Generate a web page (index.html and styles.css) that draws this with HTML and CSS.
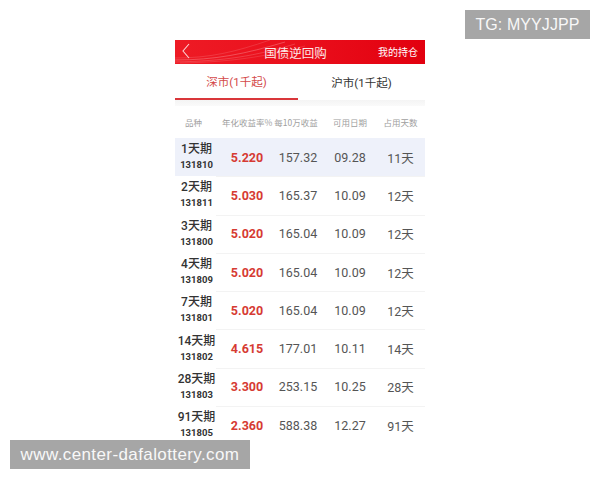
FILE: index.html
```html
<!DOCTYPE html>
<html lang="zh">
<head>
<meta charset="utf-8">
<link rel="stylesheet" href="styles.css">
</head>
<body>
<div class="phone">
  <div class="topbar">
    <svg class="swoosh" width="250" height="24" viewBox="0 0 250 24">
      <path d="M0 20 C40 20 70 14 110 2" stroke="rgba(255,255,255,0.35)" stroke-width="0.7" fill="none"/>
      <path d="M0 22 C50 21 80 16 120 4" stroke="rgba(255,255,255,0.25)" stroke-width="0.7" fill="none"/>
      <path d="M5 23 C55 22 90 17 130 6" stroke="rgba(255,255,255,0.18)" stroke-width="0.7" fill="none"/>
      <path d="M0 18 C35 18 60 12 95 0" stroke="rgba(255,255,255,0.2)" stroke-width="0.7" fill="none"/>
    </svg>
    <svg class="back" width="10" height="16" viewBox="0 0 10 16">
      <path d="M8 1 L2 8 L8 15" stroke="rgba(255,255,255,0.8)" stroke-width="1.1" fill="none"/>
    </svg>
    <span class="title">国债逆回购</span>
    <span class="mine">我的持仓</span>
  </div>
  <div class="tabs">
    <div class="tab active">深市(1千起)</div>
    <div class="tab">沪市(1千起)</div>
  </div>
  <div class="band"></div>
  <div class="thead">
    <span>品种</span><span>年化收益率%</span><span>每10万收益</span><span>可用日期</span><span>占用天数</span>
  </div>
  <div class="row hl">
    <div class="name"><b>1天期</b><small>131810</small></div>
    <span class="rate">5.220</span><span>157.32</span><span>09.28</span><span>11天</span>
  </div>
  <div class="row">
    <div class="name"><b>2天期</b><small>131811</small></div>
    <span class="rate">5.030</span><span>165.37</span><span>10.09</span><span>12天</span>
  </div>
  <div class="row">
    <div class="name"><b>3天期</b><small>131800</small></div>
    <span class="rate">5.020</span><span>165.04</span><span>10.09</span><span>12天</span>
  </div>
  <div class="row">
    <div class="name"><b>4天期</b><small>131809</small></div>
    <span class="rate">5.020</span><span>165.04</span><span>10.09</span><span>12天</span>
  </div>
  <div class="row">
    <div class="name"><b>7天期</b><small>131801</small></div>
    <span class="rate">5.020</span><span>165.04</span><span>10.09</span><span>12天</span>
  </div>
  <div class="row">
    <div class="name"><b>14天期</b><small>131802</small></div>
    <span class="rate">4.615</span><span>177.01</span><span>10.11</span><span>14天</span>
  </div>
  <div class="row">
    <div class="name"><b>28天期</b><small>131803</small></div>
    <span class="rate">3.300</span><span>253.15</span><span>10.25</span><span>28天</span>
  </div>
  <div class="row">
    <div class="name"><b>91天期</b><small>131805</small></div>
    <span class="rate">2.360</span><span>588.38</span><span>12.27</span><span>91天</span>
  </div>
</div>
<div class="tg">TG: MYYJJPP</div>
<div class="url">www.center-dafalottery.com</div>
</body>
</html>
```

FILE: styles.css
```css
html, body {
  margin: 0;
  padding: 0;
  background: #fff;
}
body {
  width: 600px;
  height: 480px;
  position: relative;
  overflow: hidden;
  font-family: Roboto, "Noto Sans CJK SC", sans-serif;
}
.phone {
  width: 250px;
  margin: 40px 0 0 175px;
}
.topbar {
  position: relative;
  height: 24px;
  background: linear-gradient(90deg, #ee1b25 0%, #ea0f1c 50%, #e2000f 100%);
  display: flex;
  align-items: center;
  justify-content: center;
}
.swoosh {
  position: absolute;
  left: 0;
  top: 0;
}
.back {
  position: absolute;
  left: 6px;
  top: 3px;
}
.title {
  color: #fde8e8;
  font-size: 12.5px;
  font-family: "Noto Sans CJK SC", sans-serif;
  margin-left: -9px;
}
.mine {
  position: absolute;
  right: 7px;
  top: 5px;
  color: #fff;
  font-size: 10px;
  line-height: 14px;
  font-family: "Noto Sans CJK SC", sans-serif;
}
.tabs {
  display: grid;
  grid-template-columns: 123px 127px;
  height: 36px;
}
.tab {
  display: flex;
  align-items: center;
  justify-content: center;
  font-size: 11.5px;
  color: #333;
  padding-bottom: 1px;
  box-sizing: border-box;
}
.tab.active {
  color: #d44a4a;
  border-bottom: 2px solid #d9363a;
}
.band {
  height: 6px;
  background: linear-gradient(180deg, #f4f4f4, #fafafa);
}
.thead {
  display: grid;
  grid-template-columns: 47px 50px 52px 52px 49px;
  height: 32px;
  align-items: center;
  font-size: 8.5px;
  color: #a0a0a0;
  text-align: center;
  font-family: "Noto Sans CJK SC", sans-serif;
  white-space: nowrap;
}
.thead span:nth-child(1) { padding-right: 10px; }
.thead span:nth-child(2) { padding-right: 14px; }
.thead span:nth-child(3) { padding-right: 4px; }
.row {
  display: grid;
  grid-template-columns: 47px 50px 52px 52px 49px;
  height: 38.3px;
  align-items: center;
  text-align: center;
  font-size: 12.5px;
  color: #555;
  position: relative;
}
.row + .row::before {
  content: "";
  position: absolute;
  left: 41px;
  right: 0;
  top: 0;
  height: 1px;
  background: #f3f3f3;
}
.row.hl {
  background: #eef1fa;
}
.name {
  display: flex;
  flex-direction: column;
  align-items: center;
  line-height: 15px;
  padding-right: 4px;
}
.name b {
  font-weight: 500;
  font-size: 12px;
  color: #333;
  font-family: Roboto, "Noto Sans CJK SC", sans-serif;
}
.name small {
  font-size: 9.5px;
  font-weight: 700;
  color: #333;
  line-height: 15px;
}
.rate {
  color: #d63b33;
  font-weight: 700;
}
.tg {
  position: absolute;
  left: 465px;
  top: 10px;
  width: 125px;
  height: 29px;
  background: #a6a6a6;
  color: #f8f8f8;
  font-family: "Liberation Sans", sans-serif;
  font-size: 16px;
  letter-spacing: 0.1px;
  display: flex;
  align-items: center;
  justify-content: center;
}
.url {
  position: absolute;
  left: 10px;
  top: 440px;
  width: 240px;
  height: 29px;
  background: #a6a6a6;
  color: #f8f8f8;
  font-family: "Liberation Sans", sans-serif;
  font-size: 17px;
  letter-spacing: 0.4px;
  display: flex;
  align-items: center;
  justify-content: center;
}
```
